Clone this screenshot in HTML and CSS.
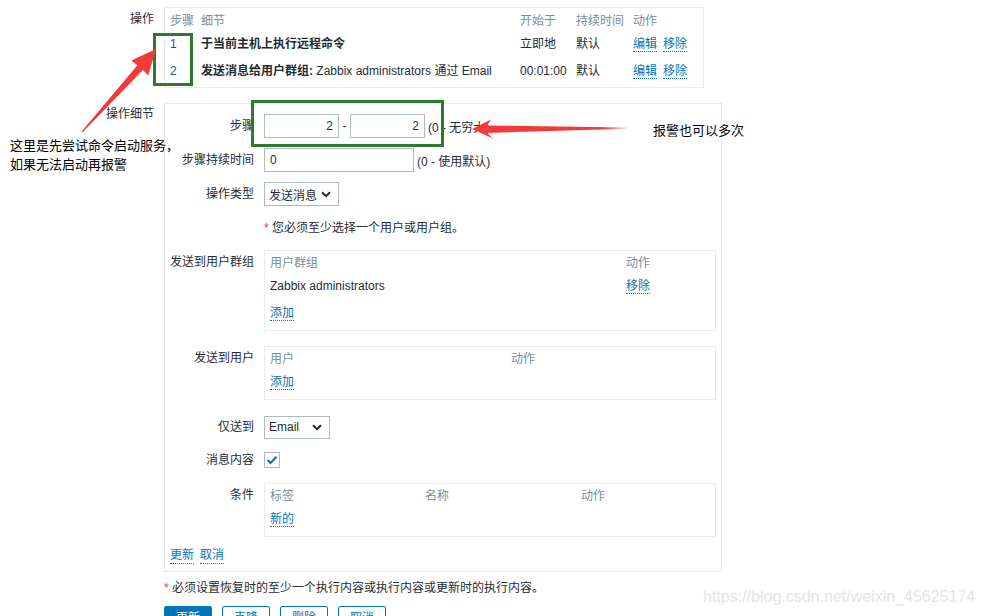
FILE: index.html
```html
<!DOCTYPE html>
<html lang="zh-CN">
<head>
  <meta charset="UTF-8">
  <title>动作 - 操作</title>
  <link rel="stylesheet" href="styles.css">
</head>
<body>
  <div class="form-list">
    <div class="outer-row">
      <div class="outer-label">操作</div>
      <div class="ops-box">
        <div class="ops-grid">
          <div class="th">步骤</div>
          <div class="th">细节</div>
          <div class="th">开始于</div>
          <div class="th">持续时间</div>
          <div class="th">动作</div>

          <div class="step">1</div>
          <div><b>于当前主机上执行远程命令</b></div>
          <div>立即地</div>
          <div>默认</div>
          <div class="links"><a class="link">编辑</a><a class="link">移除</a></div>

          <div class="step">2</div>
          <div><b>发送消息给用户群组:</b> Zabbix administrators 通过 Email</div>
          <div>00:01:00</div>
          <div>默认</div>
          <div class="links"><a class="link">编辑</a><a class="link">移除</a></div>
        </div>
      </div>
    </div>

    <div class="outer-row details-row">
      <div class="outer-label">操作细节</div>
      <div class="details-box">
        <div class="form-row">
          <label class="form-label">步骤</label>
          <div class="form-field">
            <input class="input num" value="2">
            <span class="dash">-</span>
            <input class="input num" value="2">
            <span class="hint">(0 - 无穷大)</span>
          </div>
        </div>

        <div class="form-row">
          <label class="form-label">步骤持续时间</label>
          <div class="form-field">
            <input class="input wide" value="0">
            <span class="hint">(0 - 使用默认)</span>
          </div>
        </div>

        <div class="form-row">
          <label class="form-label">操作类型</label>
          <div class="form-field">
            <div class="select type-select">
              <span>发送消息</span>
              <svg width="10" height="7" viewBox="0 0 10 7"><path d="M1 1.2 L5 5.2 L9 1.2" fill="none" stroke="#1f2c33" stroke-width="2"/></svg>
            </div>
          </div>
        </div>

        <div class="form-row">
          <div class="form-label"></div>
          <div class="form-text"><span class="req">*</span> 您必须至少选择一个用户或用户组。</div>
        </div>

        <div class="form-row row-gap-lg">
          <label class="form-label">发送到用户群组</label>
          <div class="table-box group-box">
            <div class="tb-row tb-head"><span>用户群组</span><span>动作</span></div>
            <div class="tb-row tb-item"><span>Zabbix administrators</span><span><a class="link">移除</a></span></div>
            <div class="tb-add"><a class="link">添加</a></div>
          </div>
        </div>

        <div class="form-row row-gap-lg">
          <label class="form-label">发送到用户</label>
          <div class="table-box user-box">
            <div class="tb-row tb-head"><span>用户</span><span>动作</span></div>
            <div class="tb-add"><a class="link">添加</a></div>
          </div>
        </div>

        <div class="form-row row-gap-md">
          <label class="form-label">仅送到</label>
          <div class="form-field">
            <div class="select media-select">
              <span>Email</span>
              <svg width="10" height="7" viewBox="0 0 10 7"><path d="M1 1.2 L5 5.2 L9 1.2" fill="none" stroke="#1f2c33" stroke-width="2"/></svg>
            </div>
          </div>
        </div>

        <div class="form-row check-row">
          <label class="form-label">消息内容</label>
          <div class="form-field">
            <span class="checkbox">
              <svg width="12" height="10" viewBox="0 0 12 10"><path d="M1.5 5 L4.5 8 L10.5 1.8" fill="none" stroke="#0275b8" stroke-width="2"/></svg>
            </span>
          </div>
        </div>

        <div class="form-row">
          <label class="form-label">条件</label>
          <div class="table-box cond-box">
            <div class="tb-row tb-head"><span>标签</span><span>名称</span><span>动作</span></div>
            <div class="tb-add"><a class="link">新的</a></div>
          </div>
        </div>

        <div class="detail-actions">
          <a class="link">更新</a>
          <a class="link">取消</a>
        </div>
      </div>
    </div>

    <div class="footer-note"><span class="req">*</span> 必须设置恢复时的至少一个执行内容或执行内容或更新时的执行内容。</div>

    <div class="buttons">
      <button class="btn primary">更新</button>
      <button class="btn">克隆</button>
      <button class="btn">删除</button>
      <button class="btn">取消</button>
    </div>
  </div>

  <!-- annotations drawn over the screenshot -->
  <div class="mark mark-steps"></div>
  <div class="mark mark-range"></div>

  <svg class="arrows" width="983" height="616" viewBox="0 0 983 616">
    <defs>
      <linearGradient id="fadeLeft" x1="0" y1="0" x2="1" y2="0">
        <stop offset="0" stop-color="#f23a3a"/>
        <stop offset="0.85" stop-color="#f23a3a"/>
        <stop offset="1" stop-color="#f23a3a" stop-opacity="0.15"/>
      </linearGradient>
    </defs>
    <polygon fill="#f23a3a" points="82.4,132.4 142.9,70.0 148.2,75.6 156,49 131.3,60.6 137.4,65.2 81.6,131.6"/>
    <polygon fill="url(#fadeLeft)" points="472,129 491,119.5 487,125.5 627,127.4 627,128.8 487,133 493,138.5"/>
  </svg>

  <div class="note note-left">这里是先尝试命令启动服务，<br>如果无法启动再报警</div>
  <div class="note note-right">报警也可以多次</div>

  <div class="watermark">https://blog.csdn.net/weixin_45625174</div>
</body>
</html>
```

FILE: styles.css
```css
body {
  margin: 0;
  font-family: "Liberation Sans", "Noto Sans CJK SC", sans-serif;
  font-size: 12px;
  color: #1f2c33;
  background: #fff;
  width: 983px;
  height: 616px;
  overflow: hidden;
  position: relative;
}
.form-list {
  padding-top: 7px;
}
.outer-row {
  display: flex;
  align-items: flex-start;
}
.outer-label {
  width: 154px;
  margin-right: 10px;
  text-align: right;
  line-height: 24px;
}
.details-row {
  margin-top: 15px;
}
.details-row .outer-label {
  line-height: 22px;
}
.ops-box {
  width: 528px;
  border: 1px solid #ebebeb;
  padding: 4px 5px 3px;
}
.ops-grid {
  display: grid;
  grid-template-columns: 31px 319px 56px 57px 1fr;
  grid-template-rows: 18px 27px 27px;
  align-items: center;
  line-height: 16px;
}
.th {
  color: #768d99;
}
.step {
  color: #1f4f86;
}
b {
  font-weight: bold;
}
.links .link + .link {
  margin-left: 6px;
}
.link {
  color: #0275b8;
  border-bottom: 1px dotted #0275b8;
  text-decoration: none;
  cursor: pointer;
}
.details-box {
  width: 556px;
  border: 1px solid #ebebeb;
  padding: 10px 0 7px;
}
.form-row {
  display: flex;
  align-items: flex-start;
  margin-bottom: 10px;
}
.row-gap-lg {
  margin-bottom: 15px;
}
.row-gap-md {
  margin-bottom: 13px;
}
.form-label {
  width: 84px;
  padding-left: 5px;
  margin-right: 10px;
  text-align: right;
  line-height: 24px;
  flex-shrink: 0;
}
.form-field {
  display: flex;
  align-items: center;
  height: 24px;
}
.form-text {
  line-height: 24px;
}
.input {
  box-sizing: border-box;
  height: 24px;
  border: 1px solid #acbbc2;
  font: inherit;
  color: #1f2c33;
  padding: 0 5px;
  margin: 0;
  outline: none;
}
.num {
  width: 75px;
  text-align: right;
}
.wide {
  width: 150px;
}
.dash {
  width: 11px;
  text-align: center;
}
.hint {
  margin-left: 3px;
}
.select {
  box-sizing: border-box;
  height: 24px;
  border: 1px solid #acbbc2;
  display: flex;
  align-items: center;
  justify-content: space-between;
  padding: 0 7px 0 4px;
}
.type-select {
  width: 75px;
}
.media-select {
  width: 66px;
  height: 23px;
}
.req {
  color: #e33734;
}
.table-box {
  width: 440px;
  border: 1px solid #ebebeb;
  padding: 4px 5px 9px;
}
.tb-row {
  display: grid;
  line-height: 16px;
}
.tb-add {
  line-height: 16px;
}
.tb-head {
  color: #768d99;
}
.group-box .tb-row {
  grid-template-columns: 356px 1fr;
}
.group-box .tb-item {
  margin-top: 7px;
}
.group-box .tb-add {
  margin-top: 11px;
}
.user-box .tb-row {
  grid-template-columns: 241px 1fr;
}
.cond-box .tb-row {
  grid-template-columns: 155px 156px 1fr;
}
.user-box .tb-add,
.cond-box .tb-add {
  margin-top: 7px;
}
.check-row {
  margin-bottom: 15px;
}
.check-row .form-label {
  line-height: 16px;
}
.check-row .form-field {
  height: 16px;
}
.checkbox {
  box-sizing: border-box;
  width: 16px;
  height: 16px;
  border: 1px solid #acbbc2;
  display: flex;
  align-items: center;
  justify-content: center;
}
.detail-actions {
  display: flex;
  gap: 6px;
  padding-left: 5px;
  line-height: 16px;
}
.footer-note {
  margin: 8px 0 0 164px;
  line-height: 16px;
}
.buttons {
  display: flex;
  gap: 10px;
  margin: 10px 0 0 164px;
}
.btn {
  box-sizing: border-box;
  width: 48px;
  height: 24px;
  border: 1px solid #0275b8;
  border-radius: 2px;
  background: #fff;
  color: #0275b8;
  font: inherit;
  line-height: 22px;
  padding: 0;
}
.btn.primary {
  background: #0275b8;
  color: #fff;
}

/* annotations */
.mark {
  position: absolute;
  border: 3px solid #2f7a2f;
  box-sizing: border-box;
}
.mark-steps {
  left: 153px;
  top: 33px;
  width: 40px;
  height: 53px;
}
.mark-range {
  left: 251px;
  top: 100px;
  width: 193px;
  height: 47px;
}
.arrows {
  position: absolute;
  left: 0;
  top: 0;
}
.note {
  position: absolute;
  font-size: 13px;
  line-height: 19px;
  color: #000;
}
.note-left {
  left: 10px;
  top: 136px;
}
.note-right {
  left: 653px;
  top: 121px;
}
.watermark {
  position: absolute;
  left: 703px;
  top: 588px;
  font-size: 16px;
  color: #e4e4e4;
}
```
